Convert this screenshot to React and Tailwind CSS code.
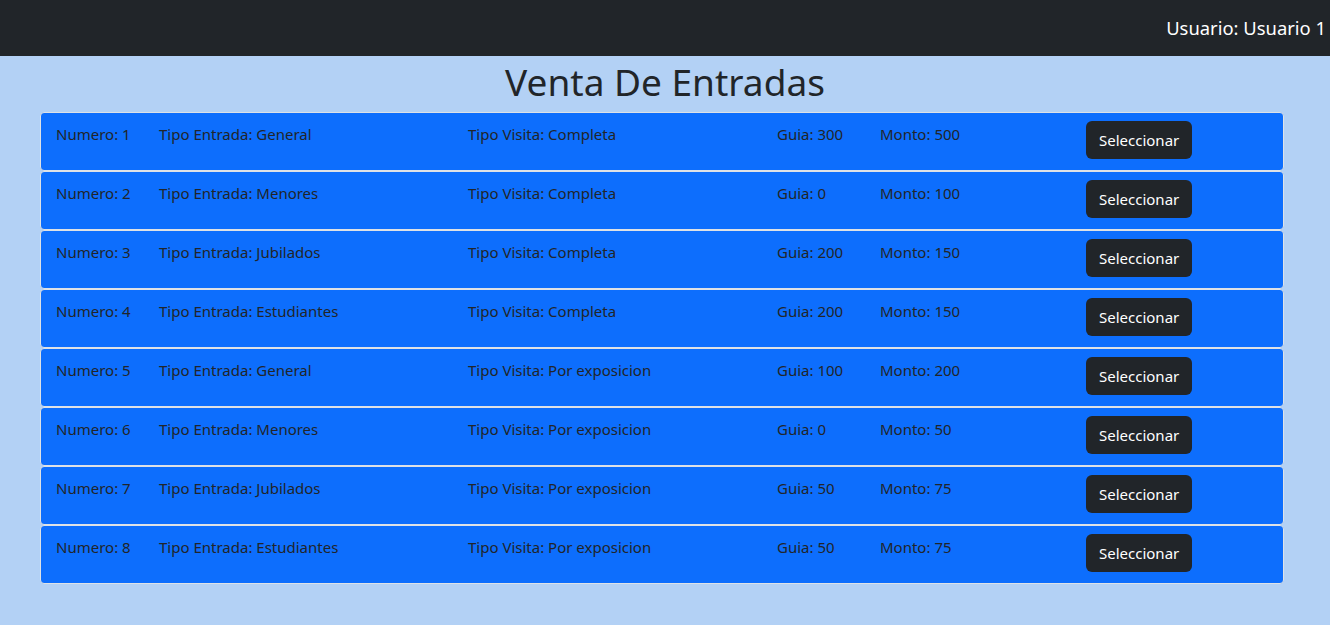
const entradas = [
  { numero: 1, tipo: 'General', visita: 'Completa', guia: 300, monto: 500 },
  { numero: 2, tipo: 'Menores', visita: 'Completa', guia: 0, monto: 100 },
  { numero: 3, tipo: 'Jubilados', visita: 'Completa', guia: 200, monto: 150 },
  { numero: 4, tipo: 'Estudiantes', visita: 'Completa', guia: 200, monto: 150 },
  { numero: 5, tipo: 'General', visita: 'Por exposicion', guia: 100, monto: 200 },
  { numero: 6, tipo: 'Menores', visita: 'Por exposicion', guia: 0, monto: 50 },
  { numero: 7, tipo: 'Jubilados', visita: 'Por exposicion', guia: 50, monto: 75 },
  { numero: 8, tipo: 'Estudiantes', visita: 'Por exposicion', guia: 50, monto: 75 },
];

export default function App() {
  return (
    <div className="min-h-screen bg-[#b3d1f5] text-[#212529] font-['Noto_Sans',sans-serif]">
      <nav className="flex h-14 items-center justify-end bg-[#212529] pr-[4px]">
        <span className="text-[18.4px] text-white">Usuario: Usuario 1</span>
      </nav>

      <h1 className="mt-[2px] mb-[6px] text-center text-[37px] leading-[48px]">Venta De Entradas</h1>

      <div className="ml-10 flex w-[1244px] flex-col">
        {entradas.map((e) => (
          <div
            key={e.numero}
            className="grid h-[59px] grid-cols-[103px_309px_309px_103px_206px_1fr] rounded-[4px] border border-[#dee2e6] bg-[#0d6efd] pl-[15px] text-[15px] leading-6"
          >
            <div className="pt-[9px]">Numero: {e.numero}</div>
            <div className="pt-[9px]">Tipo Entrada: {e.tipo}</div>
            <div className="pt-[9px]">Tipo Visita: {e.visita}</div>
            <div className="pt-[9px]">Guia: {e.guia}</div>
            <div className="pt-[9px]">Monto: {e.monto}</div>
            <div className="pt-[8px]">
              <button className="h-[38px] rounded-[6px] bg-[#212529] px-[13px] text-white">Seleccionar</button>
            </div>
          </div>
        ))}
      </div>
    </div>
  );
}
